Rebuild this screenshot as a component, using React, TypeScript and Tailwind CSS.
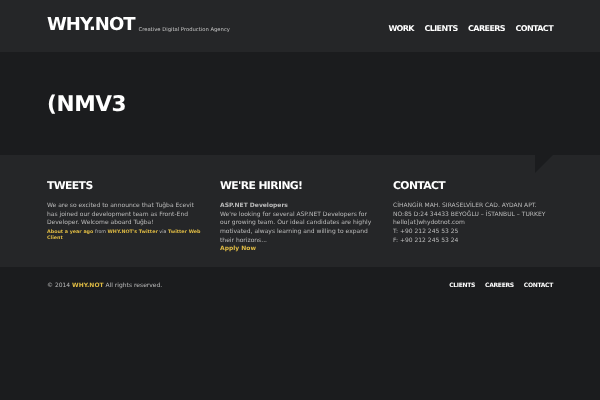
export default function App() {
  return (
    <div className="min-h-[400px] bg-[#1b1c1e] font-['DejaVu_Sans',sans-serif] text-[#bbbbbb] [text-rendering:geometricPrecision]">
      <header className="h-[52px] bg-[#252628]">
        <div className="mx-[47px] flex h-full items-start justify-between blur-[0.35px]">
          <div className="flex items-end pt-[14px]">
            <span className="text-[18px] font-bold leading-[22px] tracking-[-1px] text-white">WHY.NOT</span>
            <span className="ml-[4px] text-[5.25px] leading-[11px] text-[#c8c8c8]">Creative Digital Production Agency</span>
          </div>
          <nav className="flex gap-[10.5px] pt-[23px] text-[8px] font-bold leading-[12px] tracking-[-0.6px] text-white">
            <span>WORK</span>
            <span>CLIENTS</span>
            <span>CAREERS</span>
            <span>CONTACT</span>
          </nav>
        </div>
      </header>
      <section className="h-[103px] bg-[#1b1c1e] px-[47px] pt-[39px]">
        <h1 className="text-[21.6px] font-bold leading-[28px] tracking-[-0.4px] text-white blur-[0.35px]">(NMV3</h1>
      </section>
      <section className="relative h-[112px] bg-[#252628]">
        <div className="absolute right-[47px] top-0 h-[18px] w-[18px] bg-[#1b1c1e] [clip-path:polygon(0_0,100%_0,0_100%)]" />
        <div className="mx-[47px] grid grid-cols-[155px_155px_155px] gap-[18px] pt-[24px] text-[6px] leading-[8.64px] blur-[0.35px]">
          <div>
            <h2 className="mb-[9px] text-[10.8px] font-bold leading-[14px] tracking-[-0.6px] text-white">TWEETS</h2>
            <p>We are so excited to announce that Tuğba Ecevit has joined our development team as Front-End Developer. Welcome aboard Tuğba!</p>
            <p className="mt-[2px] text-[4.8px] leading-[6px]">
              <b className="text-[#dfbb44]">About a year ago</b> from <b className="text-[#dfbb44]">WHY.NOT's Twitter</b> via <b className="text-[#dfbb44]">Twitter Web Client</b>
            </p>
          </div>
          <div>
            <h2 className="mb-[9px] text-[10.8px] font-bold leading-[14px] tracking-[-0.6px] text-white">WE'RE HIRING!</h2>
            <p className="font-bold">ASP.NET Developers</p>
            <p>We're looking for several ASP.NET Developers for our growing team. Our ideal candidates are highly motivated, always learning and willing to expand their horizons...</p>
            <p className="font-bold text-[#dfbb44]">Apply Now</p>
          </div>
          <div>
            <h2 className="mb-[9px] text-[10.8px] font-bold leading-[14px] tracking-[-0.6px] text-white">CONTACT</h2>
            <p>CİHANGİR MAH. SIRASELVİLER CAD. AYDAN APT.</p>
            <p>NO:85 D:24 34433 BEYOĞLU – İSTANBUL – TURKEY</p>
            <p>hello[at]whydotnot.com</p>
            <p>T: +90 212 245 53 25</p>
            <p>F: +90 212 245 53 24</p>
          </div>
        </div>
      </section>
      <footer className="mx-[47px] flex items-start justify-between pt-[14px] text-[6px] leading-[9px] blur-[0.35px]">
        <p>© 2014 <b className="text-[#dfbb44]">WHY.NOT</b> All rights reserved.</p>
        <nav className="flex gap-[10px] font-bold tracking-[-0.3px] text-white">
          <span>CLIENTS</span>
          <span>CAREERS</span>
          <span>CONTACT</span>
        </nav>
      </footer>
    </div>
  );
}
